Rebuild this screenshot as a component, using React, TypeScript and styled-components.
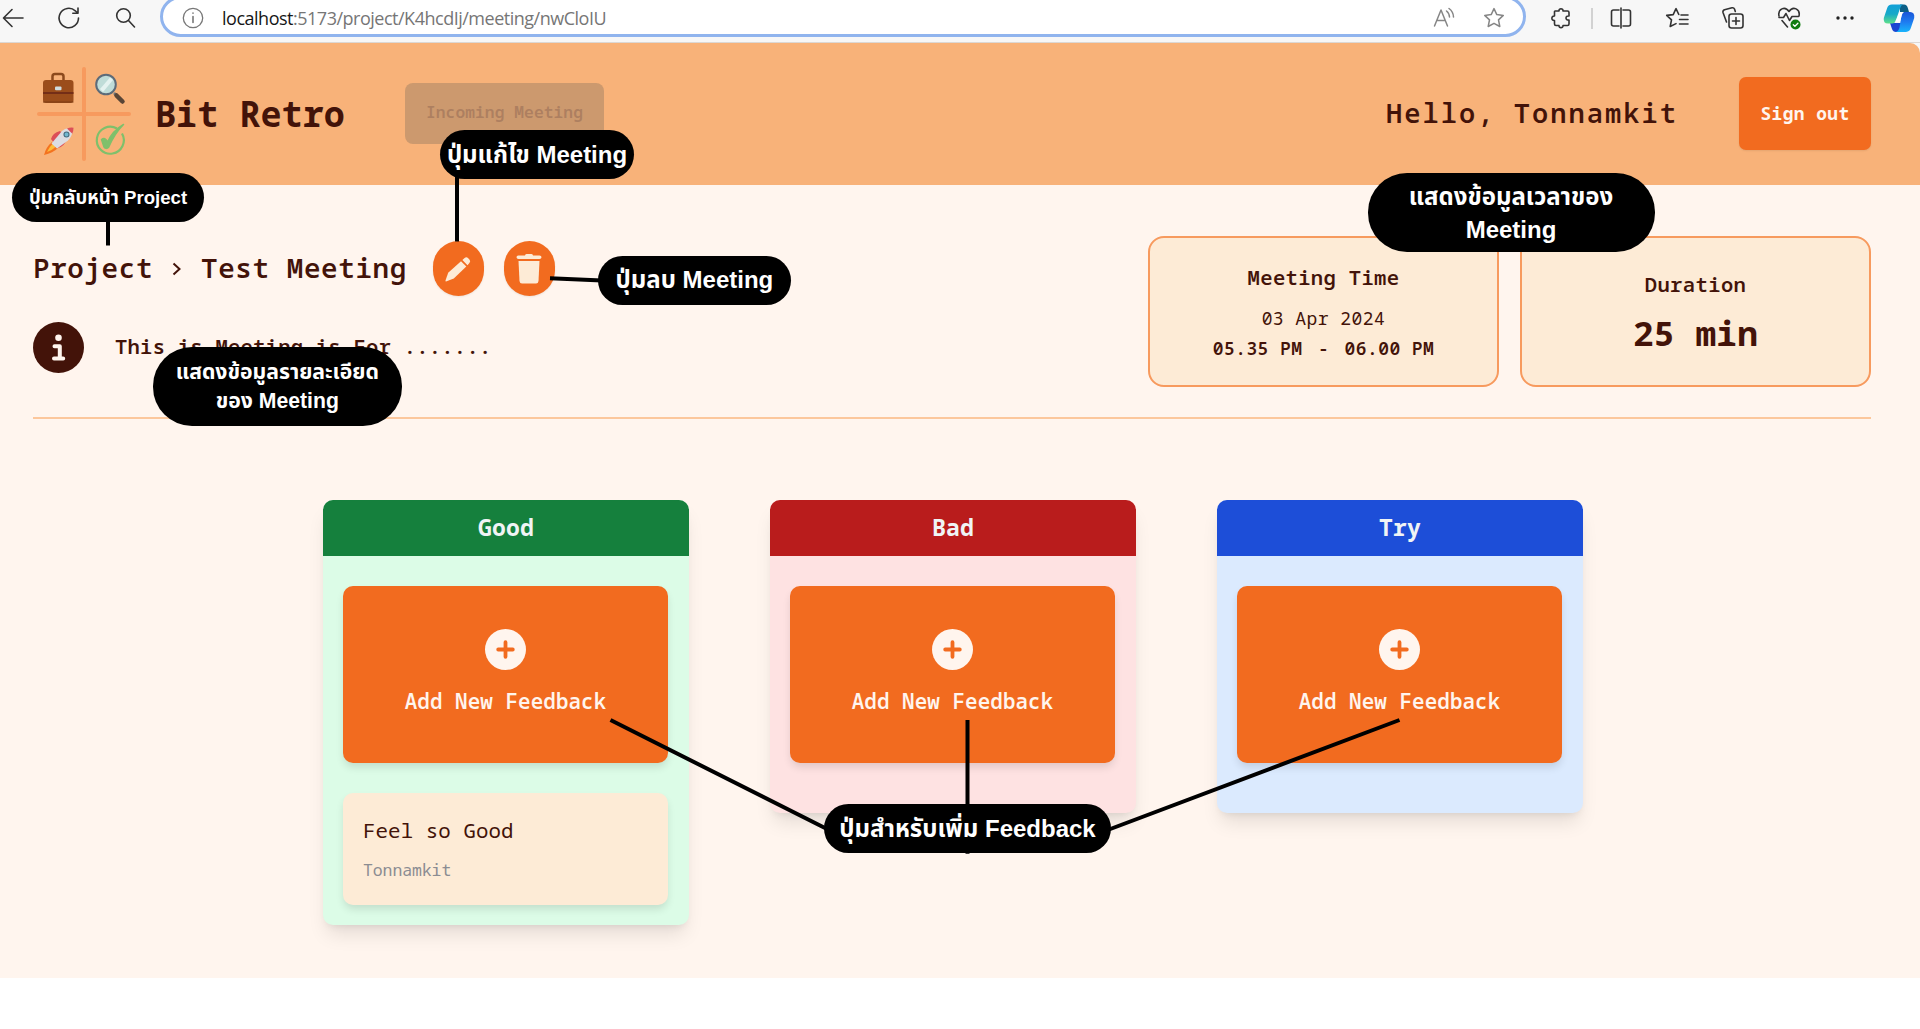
import React from "react";
import styled, { createGlobalStyle } from "styled-components";

const color = {
  ink: "#431309",
  orange: "#f26b1f",
  peach: "#f8b279",
  cream: "#fff5ee",
  sand: "#fdebd6",
  line: "#f79a5e",
};

const GlobalStyle = createGlobalStyle`
  * { box-sizing: border-box; }
  body { margin: 0; background: #fff; overflow: hidden; }
  p, h1, h2, h3 { margin: 0; }
`;

const Screen = styled.div`
  position: relative;
  width: 1920px;
  height: 1029px;
  overflow: hidden;
  background: #fff;
  font-family: "Noto Sans Mono", "DejaVu Sans Mono", "Liberation Mono", monospace;
  color: ${color.ink};
`;

/* A run of monospaced text: size is the font size, pitch the advance of one character. */
const Mono = styled.span<{ $size: number; $pitch: number; $weight?: number; $color?: string }>`
  font-size: ${(p) => p.$size}px;
  line-height: 1.36;
  font-weight: ${(p) => p.$weight ?? 600};
  letter-spacing: ${(p) => (p.$pitch - p.$size * 0.6).toFixed(3)}px;
  color: ${(p) => p.$color ?? "inherit"};
  white-space: pre;
`;

/* ---------- browser bar ---------- */

const BrowserBar = styled.div`
  display: flex;
  height: 43px;
  padding-bottom: 6px;
  align-items: center;
  background: #f7f7f7;
  border-bottom: 1px solid #dcd8d4;
`;

const NavButtons = styled.div`
  display: flex;
  width: 160px;
  flex: none;
  padding-left: 1px;
  gap: 32px;
`;

const AddressBar = styled.div`
  display: flex;
  align-items: center;
  width: 1366px;
  height: 41px;
  flex: none;
  margin-top: -3px;
  padding: 2px 17px 0 18px;
  border: 3px solid #90b4ee;
  border-radius: 21px;
  background: #fff;
`;

const Url = styled.span`
  flex: 1;
  margin-left: 17px;
  font-family: "Open Sans", "Noto Sans", sans-serif;
  font-size: 18px;
  line-height: 24px;
  letter-spacing: -0.49px;
  color: #767676;
`;

const UrlHost = styled.span`
  color: #161616;
`;

const AddressIcons = styled.div`
  display: flex;
  gap: 26px;
`;

const ToolCell = styled.div<{ $width?: number }>`
  display: flex;
  justify-content: center;
  width: ${(p) => p.$width ?? 56}px;
  flex: none;
`;

const Extensions = styled(ToolCell)`
  margin-left: 7px;
`;

const Separator = styled.div`
  width: 2px;
  height: 21px;
  flex: none;
  margin: 0 0 0 2px;
  background: #d2d2d2;
`;

const Ico = ({ size = 24, tint = "#333", children }: { size?: number; tint?: string; children: React.ReactNode }) => (
  <svg width={size} height={size} viewBox="0 0 24 24" fill="none" stroke={tint} strokeWidth={1.6} strokeLinecap="round" strokeLinejoin="round">
    {children}
  </svg>
);

const STAR = "M12 2.6l2.8 6 6.5.8-4.8 4.5 1.3 6.6-5.8-3.2-5.8 3.2 1.3-6.6-4.8-4.5 6.5-.8z";

function Browser() {
  return (
    <BrowserBar>
      <NavButtons>
        <Ico><path d="M22 12H3M11 3.5L2.5 12l8.500 8.500" /></Ico>
        <Ico><path d="M21.500 12a9.700 9.700 0 1 1-3.200-7.200L20.500 7M21 2v5.200h-5.200" /></Ico>
        <Ico><circle cx="10.500" cy="9.500" r="6.800" /><path d="M15.500 14.500l6 6.500" /></Ico>
      </NavButtons>
      <AddressBar>
        <Ico tint="#777"><circle cx="12" cy="12" r="9.700" strokeWidth={1.300} /><path d="M12 10.500v6M12 7v.300" /></Ico>
        <Url><UrlHost>localhost</UrlHost>:5173/project/K4hcdIj/meeting/nwCloIU</Url>
        <AddressIcons>
          <Ico tint="#868686"><path d="M2.500 20L9 4l6.500 16M4.800 14.500h8.400M14.500 5a8 8 0 0 1 3 6M17 2.500a11 11 0 0 1 4.500 8.500" strokeWidth={1.500} /></Ico>
          <Ico tint="#868686"><path d={STAR} strokeWidth={1.500} /></Ico>
        </AddressIcons>
      </AddressBar>
      <Extensions>
        <Ico><path d="M6 5h4c-.500-3 4.500-3 4 0h4.500q1.500 0 1.500 1.500V10c-4-.500-4 4.500 0 4v4q0 1.500-1.500 1.500H14c.500 2.800-4.500 2.800-4 0H7q-1.500 0-1.500-1.500v-3.500c-3.500.500-3.500-5 0-4.500V5.500z" /></Ico>
      </Extensions>
      <Separator />
      <ToolCell><Ico><path d="M10 4H4.500Q2.500 4 2.500 6v12q0 2 2 2H10M14 4h5.500q2 0 2 2v12q0 2-2 2H14M12 2v20" /></Ico></ToolCell>
      <ToolCell><Ico><path d="M13.800 8.500L11 2.600 8.200 8.600 1.700 9.400l4.800 4.500-1.300 6.600L11 17.600M16 9h7M14.500 13.500H23M14.500 18H23" /></Ico></ToolCell>
      <ToolCell>
        <Ico>
          <path d="M5.500 16L2 6.500Q1.500 4.500 3.500 3.800L11 1.800q1.800-.400 2.500 1.200l.800 2.500" />
          <rect x="8" y="8" width="14" height="14" rx="2.500" /><path d="M15 11.500v7M11.500 15h7" />
        </Ico>
      </ToolCell>
      <ToolCell>
        <Ico>
          <path d="M2 10C.500 3 8-.500 12 5.500 16-.500 23.500 3 22 10M5 14.500l5.500 6.500M2 11.500h4.500l2.500-4 3.500 7 2.500-4h6.500" />
          <circle cx="18.500" cy="18.500" r="5" fill="#107c10" stroke="none" /><path d="M16.300 18.700l1.600 1.500 3-3" stroke="#fff" strokeWidth={1.300} />
        </Ico>
      </ToolCell>
      <ToolCell>
        <Ico tint="none"><g fill="#222"><circle cx="5" cy="12" r="1.700" /><circle cx="12" cy="12" r="1.700" /><circle cx="19" cy="12" r="1.700" /></g></Ico>
      </ToolCell>
      <ToolCell $width={51}>
        <svg width="32" height="30" viewBox="0 0 32 30">
          <defs>
            <linearGradient id="cpA" x1="0" y1="0" x2="0" y2="1"><stop offset="0" stopColor="#12a0d8" /><stop offset=".5" stopColor="#17a9c8" /><stop offset="1" stopColor="#5fe08a" /></linearGradient>
            <linearGradient id="cpB" x1="0" y1="0" x2="0" y2="1"><stop offset="0" stopColor="#1a55d8" /><stop offset=".5" stopColor="#1e7cf0" /><stop offset="1" stopColor="#19b4fb" /></linearGradient>
          </defs>
          <path d="M17 1.500h4q3 0 4 4l1 3.500-9 2z" fill="#0b5e86" />
          <path d="M7 20l2 6q1 3 4 3h3l3-9z" fill="#1a46d2" />
          <path d="M9 1.500h11q-2 .500-3 4l-4 11.500q-1 3.500-4 3.500H5Q0 20.500 .800 15L4 5.500q1-4 5-4z" fill="url(#cpA)" />
          <path d="M22.500 9h4.500q5 0 4.200 6L28 24.500q-1 4-5 4.500H12.500q3-.500 4-4.500L18.500 12q1-3 4-3z" fill="url(#cpB)" />
          <path d="M16.800 9h4.400q-1.700.700-2.300 3l-1.800 6.500h-5.300q1.200-.600 1.800-2.500z" fill="#fff" />
        </svg>
      </ToolCell>
    </BrowserBar>
  );
}

/* ---------- app header ---------- */

const HeaderBack = styled.div`
  background: #f7f7f7;
`;

const Header = styled.header`
  display: flex;
  align-items: center;
  height: 142px;
  padding: 0 49px 1px 37px;
  background: ${color.peach};
  border-top-right-radius: 10px;
`;

const Brand = styled.div`
  display: flex;
  align-items: center;
  width: 368px;
  gap: 24px;
`;

const IncomingButton = styled.button`
  width: 199px;
  height: 61px;
  padding: 0 0 2px;
  border: 0;
  border-radius: 8px;
  background: #cc996e;
  font-family: inherit;
`;

const Account = styled.div`
  display: flex;
  align-items: center;
  gap: 61px;
  margin-left: auto;
`;

const SignOut = styled.button`
  width: 132px;
  height: 73px;
  padding: 0 0 1px;
  border: 0;
  border-radius: 7px;
  background: ${color.orange};
  box-shadow: 0 1px 2px rgba(0, 0, 0, 0.08);
  font-family: inherit;
`;

function Logo() {
  return (
    <svg width="94" height="94" viewBox="0 0 94 94">
      <path d="M47 2v90M2 47h90" stroke={color.line} strokeWidth="4" strokeLinecap="round" />
      <path d="M15.500 13V9.500Q15.500 7 18 7h6q2.500 0 2.500 2.500V13" fill="none" stroke="#8d4a1c" strokeWidth="2.500" />
      <rect x="6" y="13" width="30.500" height="23" rx="3" fill="#9b4d1b" />
      <path d="M6 26h30.500" stroke="#702b18" strokeWidth="1.800" />
      <path d="M6 35h30.500" stroke="#7d3c14" strokeWidth="1" />
      <rect x="18" y="19.500" width="6.500" height="3.800" rx="1" fill="#cfdde0" />
      <path d="M77 26l4 4" stroke="#6d7780" strokeWidth="2.500" />
      <path d="M79.500 28.500l6 6" stroke="#594536" strokeWidth="4.500" strokeLinecap="round" />
      <circle cx="69" cy="17.500" r="9.800" fill="#bfdcd8" stroke="#5d6b79" strokeWidth="2" />
      <path d="M63 22L73 10.500l3 2.500-10 12z" fill="#e4f2f0" />
      <path d="M14 72q1.500-6 9-8l3 3-9 9zM21 81q6-1 8.500-8.500l-2-3-7.500 8z" fill="#dc4f58" />
      <path d="M7 88q2-8 8-13l6 6q-5 5-14 7z" fill="#f4731f" />
      <path d="M10 85q2.500-5.500 6-8.500l3 3q-4 4-9 5.500z" fill="#fdbd3a" />
      <path d="M14.500 76.500L25 64q4-4 11-2-1 8-5 11.500L20 81.500z" fill="#dcdde2" />
      <path d="M30 61.500q3-1.300 6.500-.800 0 3-1.200 6z" fill="#dc4f58" />
      <circle cx="29.500" cy="67.500" r="2.500" fill="#72b8cf" stroke="#436c80" strokeWidth="1.100" />
      <path d="M80 61.500a13.500 13.500 0 1 0 5 5" fill="none" stroke="#7fc06b" strokeWidth="2.200" />
      <path d="M64.500 72.500q3.500-3 6 2.500 5-11 16-17.500-9 9-15 23-2.500 2-4.500-.500z" fill="#7fc06b" stroke="#7fc06b" strokeWidth="1.500" strokeLinejoin="round" />
    </svg>
  );
}

function AppHeader() {
  return (
    <HeaderBack>
      <Header>
        <Brand>
          <Logo />
          <Mono as="h1" $size={35} $pitch={21.1} $weight={700}>Bit Retro</Mono>
        </Brand>
        <IncomingButton>
          <Mono $size={16.200} $pitch={9.820} $color="#ad7f60">Incoming Meeting</Mono>
        </IncomingButton>
        <Account>
          <Mono $size={27} $pitch={18.250}>Hello, Tonnamkit</Mono>
          <SignOut><Mono $size={17.800} $pitch={11.150} $weight={700} $color={color.cream}>Sign out</Mono></SignOut>
        </Account>
      </Header>
    </HeaderBack>
  );
}

/* ---------- meeting summary ---------- */

const Main = styled.main`
  height: 793px;
  padding: 51px 49px 0 33px;
  background: ${color.cream};
`;

const Summary = styled.section`
  display: flex;
  justify-content: space-between;
  height: 183px;
  border-bottom: 2px solid #fcc79c;
`;

const Details = styled.div`
  display: flex;
  flex-direction: column;
  gap: 26px;
  padding-top: 5px;
`;

const Breadcrumb = styled.div`
  display: flex;
  align-items: center;
  height: 55px;
`;

const Crumb = styled(Mono)`
  margin-top: -2px;
`;

const Chevron = styled.svg`
  margin: 0 18px 0 18px;
`;

const RoundButton = styled.button`
  display: flex;
  align-items: center;
  justify-content: center;
  width: 51px;
  height: 55px;
  margin-left: 20px;
  padding: 0;
  border: 0;
  border-radius: 28px;
  background: ${color.orange};
  box-shadow: 0 1px 2px rgba(0, 0, 0, 0.08);

  &:first-of-type { margin-left: 26px; }
`;

const Description = styled.div`
  display: flex;
  align-items: center;
  gap: 31px;
  height: 51px;
`;

const Facts = styled.div`
  display: flex;
  gap: 21px;
`;

const Fact = styled.div<{ $drop?: number }>`
  display: flex;
  flex-direction: column;
  align-items: center;
  justify-content: center;
  width: 351px;
  height: 151px;
  padding-top: ${(p) => p.$drop ?? 0}px;
  border: 2px solid ${color.line};
  border-radius: 16px;
  background: ${color.sand};
`;

const FactTitle = styled.div<{ $gap: number }>`
  margin-bottom: ${(p) => p.$gap}px;
`;

const TimeRange = styled.div`
  display: flex;
  gap: 15.5px;
  margin-top: 6px;
`;

function MeetingSummary() {
  return (
    <Summary>
      <Details>
        <Breadcrumb>
          <Crumb $size={27.500} $pitch={17.150}>Project</Crumb>
          <Chevron width="12" height="16" viewBox="0 0 12 16" fill="none" stroke={color.ink} strokeWidth="2">
            <path d="M2.500 2.500L8.500 8l-6 5.500" />
          </Chevron>
          <Crumb as="h2" $size={27.500} $pitch={17.150}>Test Meeting</Crumb>
          <RoundButton aria-label="Edit meeting">
            <svg width="28" height="28" viewBox="0 0 28 28" fill={color.sand}>
              <path d="M2 26.500q-.700 0-.500-1L4.200 17.800 17 6.200l5.300 5.300L9.800 23.600z" />
              <path d="M18.400 5l2.200-2q1.800-1.500 3.600.200l1.200 1.300q1.600 1.800 0 3.500l-1.900 2.200z" />
            </svg>
          </RoundButton>
          <RoundButton aria-label="Delete meeting">
            <svg width="26" height="31" viewBox="0 0 26 31" fill={color.sand}>
              <path d="M9 2.500Q9 1 10.500 1h5Q17 1 17 2.500h6.500q2 0 2 1.700T23.500 6h-21Q.500 6 .500 4.200t2-1.700z" />
              <path d="M2.500 8h21l-1 20q-.200 2.500-2.500 2.500H6q-2.300 0-2.500-2.500z" />
            </svg>
          </RoundButton>
        </Breadcrumb>
        <Description>
          <svg width="51" height="51" viewBox="0 0 51 51">
            <circle cx="25.500" cy="25.500" r="25.500" fill={color.ink} />
            <circle cx="25.500" cy="15.700" r="3.300" fill={color.cream} />
            <path d="M21.500 24.200h5.300v11.500M21 36.500h9.200" fill="none" stroke={color.cream} strokeWidth="4" strokeLinecap="round" strokeLinejoin="round" />
          </svg>
          <Crumb $size={20.500} $pitch={12.550}>This is Meeting is For .......</Crumb>
        </Description>
      </Details>
      <Facts>
        <Fact $drop={2}>
          <FactTitle $gap={14}><Mono $size={20.500} $pitch={12.650}>Meeting Time</Mono></FactTitle>
          <Mono $size={18} $pitch={11.250} $weight={400}>03 Apr 2024</Mono>
          <TimeRange>
            <Mono $size={18} $pitch={11.200}>05.35 PM</Mono>
            <Mono $size={18} $pitch={11.200}>-</Mono>
            <Mono $size={18} $pitch={11.200}>06.00 PM</Mono>
          </TimeRange>
        </Fact>
        <Fact $drop={5}>
          <FactTitle $gap={11}><Mono $size={20.500} $pitch={12.700}>Duration</Mono></FactTitle>
          <Mono $size={34.500} $pitch={20.850} $weight={700}>25 min</Mono>
        </Fact>
      </Facts>
    </Summary>
  );
}

/* ---------- feedback board ---------- */

const Board = styled.section`
  display: flex;
  align-items: flex-start;
  gap: 81px;
  margin: 81px 0 0 290px;
`;

const Lane = styled.div<{ $bg: string }>`
  width: 366px;
  padding-bottom: 20px;
  border-radius: 10px;
  background: ${(p) => p.$bg};
  box-shadow: 0 13px 19px -4px rgba(0, 0, 0, 0.1), 0 5px 8px -5px rgba(0, 0, 0, 0.1);
`;

const LaneTitle = styled.h3<{ $bg: string }>`
  display: flex;
  align-items: center;
  justify-content: center;
  height: 56px;
  padding-bottom: 1px;
  border-radius: 10px 10px 0 0;
  background: ${(p) => p.$bg};
`;

const AddButton = styled.button`
  display: flex;
  flex-direction: column;
  align-items: center;
  width: 325px;
  height: 177px;
  margin: 30px 0 30px 20px;
  padding: 43px 0 0;
  gap: 17px;
  border: 0;
  border-radius: 10px;
  background: ${color.orange};
  box-shadow: 0 5px 8px -1px rgba(0, 0, 0, 0.12);
  font-family: inherit;
`;

const Note = styled.article`
  display: flex;
  flex-direction: column;
  gap: 15px;
  width: 325px;
  height: 112px;
  margin-left: 20px;
  padding: 23px 20px 0;
  border-radius: 10px;
  background: ${color.sand};
  box-shadow: 0 5px 8px -1px rgba(0, 0, 0, 0.12);
`;

const lanes = [
  { title: "Good", head: "#15803d", body: "#dcfce7", notes: [{ text: "Feel so Good", by: "Tonnamkit" }] },
  { title: "Bad", head: "#b91c1c", body: "#fee2e2", notes: [] },
  { title: "Try", head: "#1d4ed8", body: "#dbeafe", notes: [] },
];

function FeedbackBoard() {
  return (
    <Board>
      {lanes.map((lane) => (
        <Lane key={lane.title} $bg={lane.body}>
          <LaneTitle $bg={lane.head}><Mono $size={23} $pitch={14} $weight={700} $color="#f0f4f5">{lane.title}</Mono></LaneTitle>
          <AddButton>
            <svg width="41" height="41" viewBox="0 0 41 41">
              <circle cx="20.500" cy="20.500" r="20.500" fill={color.cream} />
              <path d="M20.500 13.200v14.600M13.200 20.500h14.600" stroke={color.orange} strokeWidth="3.800" strokeLinecap="round" />
            </svg>
            <Mono $size={20.800} $pitch={12.600} $color={color.cream}>Add New Feedback</Mono>
          </AddButton>
          {lane.notes.map((note) => (
            <Note key={note.text}>
              <Mono $size={20.800} $pitch={12.550} $weight={400}>{note.text}</Mono>
              <Mono $size={16.500} $pitch={9.800} $weight={400} $color="#8b8c92">{note.by}</Mono>
            </Note>
          ))}
        </Lane>
      ))}
    </Board>
  );
}

/* ---------- callouts laid over the page ---------- */

const Overlay = styled.div`
  position: absolute;
  inset: 0;
  pointer-events: none;
`;

const Leaders = styled.svg`
  position: absolute;
  inset: 0;
`;

const Callout = styled.div<{ $x: number; $y: number; $w: number; $h: number; $size?: number; $r?: number; $lh?: number }>`
  position: absolute;
  left: ${(p) => p.$x}px;
  top: ${(p) => p.$y}px;
  width: ${(p) => p.$w}px;
  height: ${(p) => p.$h}px;
  display: flex;
  flex-direction: column;
  align-items: center;
  justify-content: center;
  border-radius: ${(p) => p.$r ?? 25}px;
  background: #000;
  color: #fff;
  font: bold ${(p) => p.$size ?? 24}px / ${(p) => p.$lh ?? 32}px "Liberation Sans", "Noto Sans Thai", sans-serif;
  white-space: nowrap;
`;

function Callouts() {
  return (
    <Overlay>
      <Leaders width="1920" height="1029" viewBox="0 0 1920 1029" fill="none" stroke="#000" strokeWidth="4">
        <path d="M108 218v27.500M457 175v66.500M550 278.300l52 2.200M610.500 720L827 829M967.500 720v133.700M1399.500 720L1109 829.500" />
      </Leaders>
      <Callout $x={12} $y={173} $w={192} $h={49} $size={18.600}>ปุ่มกลับหน้า Project</Callout>
      <Callout $x={440} $y={130.400} $w={194} $h={49}>ปุ่มแก้ไข Meeting</Callout>
      <Callout $x={597.700} $y={255.700} $w={193.500} $h={49}>ปุ่มลบ Meeting</Callout>
      <Callout $x={152.800} $y={347} $w={249} $h={78.500} $size={21.200} $r={39} $lh={29}>
        <span>แสดงข้อมูลรายละเอียด</span>
        <span>ของ Meeting</span>
      </Callout>
      <Callout $x={1367.500} $y={173} $w={287} $h={79} $r={39} $lh={33}>
        <span>แสดงข้อมูลเวลาของ</span>
        <span>Meeting</span>
      </Callout>
      <Callout $x={824} $y={804.400} $w={287} $h={49}>ปุ่มสำหรับเพิ่ม Feedback</Callout>
    </Overlay>
  );
}

export default function App() {
  return (
    <Screen>
      <GlobalStyle />
      <Browser />
      <AppHeader />
      <Main>
        <MeetingSummary />
        <FeedbackBoard />
      </Main>
      <Callouts />
    </Screen>
  );
}
